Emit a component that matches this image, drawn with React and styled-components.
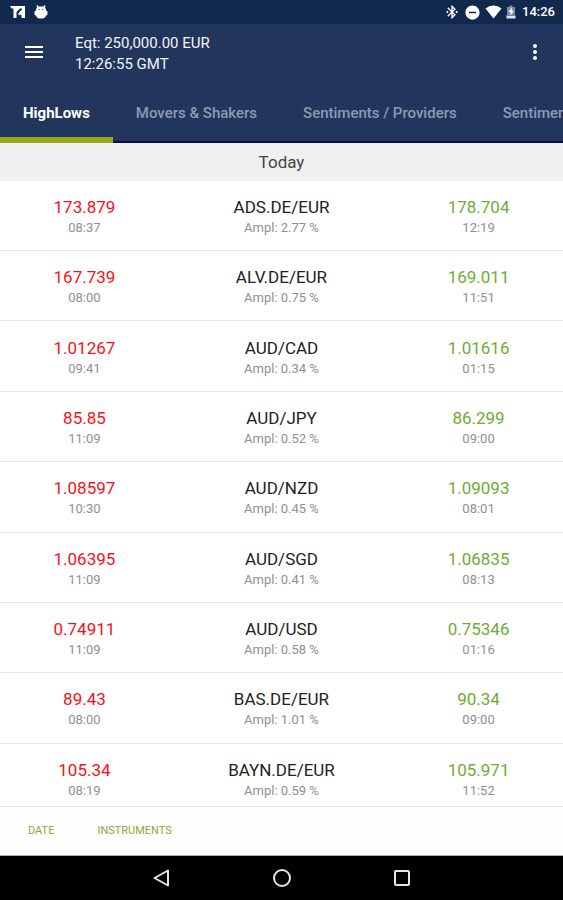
import React, { useState } from "react";
import styled, { createGlobalStyle } from "styled-components";
import { MdBluetoothConnected, MdRemoveCircle, MdMenu, MdMoreVert } from "react-icons/md";

const GlobalStyle = createGlobalStyle`
  * {
    box-sizing: border-box;
  }
  body {
    margin: 0;
    background: #fff;
    font-family: Roboto, "Liberation Sans", sans-serif;
  }
`;

const Screen = styled.div`
  display: flex;
  flex-direction: column;
  height: 100vh;
  overflow: hidden;
`;

const StatusBar = styled.div`
  display: flex;
  flex: none;
  align-items: center;
  justify-content: space-between;
  height: 24px;
  padding: 0 8px 0 9px;
  background: #10294c;
  color: #fff;
`;

const StatusGroup = styled.div`
  display: flex;
  align-items: center;
  gap: ${props => props.$gap}px;
`;

const Clock = styled.span`
  padding-left: 2px;
  font-size: 13px;
  font-weight: 500;
  line-height: 24px;
`;

const Header = styled.header`
  flex: none;
  background: #22365d;
`;

const Toolbar = styled.div`
  display: flex;
  align-items: center;
  padding: 5px 16px 8px 22px;
`;

const IconButton = styled.button`
  display: flex;
  padding: 0;
  border: none;
  background: none;
  color: #fff;
  cursor: pointer;
`;

const Account = styled.div`
  flex: 1;
  padding: 4px 0 0 29px;
  color: #f2f4f7;
  font-size: 15px;
  font-weight: 400;
  line-height: 21px;
`;

const Tabs = styled.div`
  display: flex;
  height: 60px;
  overflow: hidden;
  box-shadow: inset 0 -2px #0b0b58;
`;

const Tab = styled.button`
  flex: none;
  padding: 6px 23px 0;
  border: none;
  border-bottom: 6px solid ${props => (props.$active ? "#9aa91c" : "transparent")};
  background: none;
  color: ${props => (props.$active ? "#fff" : "#8c9ab3")};
  font-family: inherit;
  font-size: 15px;
  font-weight: ${props => (props.$active ? 700 : 500)};
  line-height: 20px;
  cursor: pointer;
`;

const Period = styled.h2`
  flex: none;
  margin: 0;
  background: #f0f0f0;
  color: #444;
  font-size: 17px;
  font-weight: 400;
  line-height: 38px;
  text-align: center;
`;

const List = styled.main`
  flex: 1;
  min-height: 0;
  overflow-y: auto;
  scrollbar-width: none;
`;

const Table = styled.table`
  width: 100%;
  height: calc(100% + 8px);
  border-collapse: collapse;
  table-layout: fixed;
`;

const Row = styled.tr`
  border-bottom: 1px solid #e8e8e8;
`;

const Cell = styled.td`
  width: ${props => props.width};
  padding: 3px 0 0;
  text-align: center;
`;

const Value = styled.div`
  color: ${props => props.color};
  font-size: 17px;
  line-height: 21px;
`;

const Detail = styled.div`
  color: #909090;
  font-size: 13px;
  line-height: 19px;
`;

const Actions = styled.footer`
  display: flex;
  flex: none;
  gap: 43px;
  padding: 0 28px;
  border-top: 1px solid #e8e8e8;
  border-bottom: 1px solid #aaa;
  background: #fefefe;
`;

const Action = styled.button`
  padding: 0;
  border: none;
  background: none;
  color: #94a53c;
  font-family: inherit;
  font-size: 11px;
  line-height: 48px;
  text-transform: uppercase;
  cursor: pointer;
`;

const NavBar = styled.nav`
  display: flex;
  flex: none;
  align-items: center;
  justify-content: center;
  gap: 100px;
  height: 44px;
  background: #000;
`;

const tabs = ["HighLows", "Movers & Shakers", "Sentiments / Providers", "Sentiments / Instruments"];

const rows = [
  { name: "ADS.DE/EUR", ampl: "2.77", low: "173.879", lowTime: "08:37", high: "178.704", highTime: "12:19" },
  { name: "ALV.DE/EUR", ampl: "0.75", low: "167.739", lowTime: "08:00", high: "169.011", highTime: "11:51" },
  { name: "AUD/CAD", ampl: "0.34", low: "1.01267", lowTime: "09:41", high: "1.01616", highTime: "01:15" },
  { name: "AUD/JPY", ampl: "0.52", low: "85.85", lowTime: "11:09", high: "86.299", highTime: "09:00" },
  { name: "AUD/NZD", ampl: "0.45", low: "1.08597", lowTime: "10:30", high: "1.09093", highTime: "08:01" },
  { name: "AUD/SGD", ampl: "0.41", low: "1.06395", lowTime: "11:09", high: "1.06835", highTime: "08:13" },
  { name: "AUD/USD", ampl: "0.58", low: "0.74911", lowTime: "11:09", high: "0.75346", highTime: "01:16" },
  { name: "BAS.DE/EUR", ampl: "1.01", low: "89.43", lowTime: "08:00", high: "90.34", highTime: "09:00" },
  { name: "BAYN.DE/EUR", ampl: "0.59", low: "105.34", lowTime: "08:19", high: "105.971", highTime: "11:52" },
];

function BrandIcon() {
  return (
    <svg width="17" height="14" viewBox="0 0 17 14" fill="#fff">
      <path d="M1 1H16V13H12.500V10H9.500V8L13 4.500V3.500H11L7.500 7V13H4.500V3.500H2.500Z" />
    </svg>
  );
}

function DroidIcon() {
  return (
    <svg width="14" height="14" viewBox="0 0 14 14">
      <path d="M3 0.500L4.500 3M11 0.500L9.500 3" stroke="#fff" strokeWidth="1.500" />
      <rect x="2" y="1.500" width="10" height="12" rx="4" fill="#fff" />
      <rect x="0.500" y="5.500" width="13" height="5" rx="1.500" fill="#fff" />
      <path d="M4.500 4.500H6M8 4.500H9.500" stroke="#5b6b85" />
    </svg>
  );
}

function SignalIcon() {
  return (
    <svg width="17" height="14" viewBox="0 0 17 14" fill="#fff">
      <path d="M0.500 3.500Q4 0.500 8.500 0.500T16.500 3.500L8.500 13.500Z" />
    </svg>
  );
}

function BatteryIcon() {
  return (
    <svg width="10" height="14" viewBox="0 0 10 14">
      <path d="M3.500 0.500H6.500V2H9V10H1V2H3.500Z" fill="#7f8da3" />
      <path d="M0.500 10.500H9.500V13.500H0.500Z" fill="#dfe4ea" />
      <path d="M5.800 2.500L2.500 7H4.500V10.500L7.800 5.800H5.800Z" fill="#fff" />
    </svg>
  );
}

function BackIcon() {
  return (
    <svg width="20" height="20" viewBox="0 0 20 20" fill="none" stroke="#e6e6e6" strokeWidth="2">
      <path d="M16 2.500V17.500L2.500 10Z" strokeLinejoin="round" />
    </svg>
  );
}

function HomeIcon() {
  return (
    <svg width="20" height="20" viewBox="0 0 20 20" fill="none" stroke="#e6e6e6" strokeWidth="2">
      <circle cx="10" cy="10" r="8" />
    </svg>
  );
}

function RecentIcon() {
  return (
    <svg width="20" height="20" viewBox="0 0 20 20" fill="none" stroke="#e6e6e6" strokeWidth="2">
      <rect x="3" y="3" width="14" height="14" rx="1" />
    </svg>
  );
}

function Quote({ width, value, detail, color }) {
  return (
    <Cell width={width}>
      <Value color={color}>{value}</Value>
      <Detail>{detail}</Detail>
    </Cell>
  );
}

function App() {
  const [active, setActive] = useState(tabs[0]);

  return (
    <Screen>
      <GlobalStyle />
      <StatusBar>
        <StatusGroup $gap={8}>
          <BrandIcon />
          <DroidIcon />
        </StatusGroup>
        <StatusGroup $gap={4}>
          <MdBluetoothConnected size={16} />
          <MdRemoveCircle size={17} />
          <SignalIcon />
          <BatteryIcon />
          <Clock>14:26</Clock>
        </StatusGroup>
      </StatusBar>
      <Header>
        <Toolbar>
          <IconButton aria-label="Menu">
            <MdMenu size={24} />
          </IconButton>
          <Account>
            <div>Eqt: 250,000.00 EUR</div>
            <div>12:26:55 GMT</div>
          </Account>
          <IconButton aria-label="More options">
            <MdMoreVert size={24} />
          </IconButton>
        </Toolbar>
        <Tabs role="tablist">
          {tabs.map(tab => (
            <Tab
              key={tab}
              role="tab"
              aria-selected={tab === active}
              $active={tab === active}
              onClick={() => setActive(tab)}
            >
              {tab}
            </Tab>
          ))}
        </Tabs>
      </Header>
      <Period id="period">Today</Period>
      <List>
        <Table aria-labelledby="period">
          <tbody>
            {rows.map(row => (
              <Row key={row.name}>
                <Quote width="30%" value={row.low} detail={row.lowTime} color="#fa0f19" />
                <Quote width="40%" value={row.name} detail={`Ampl: ${row.ampl} %`} color="#222" />
                <Quote width="30%" value={row.high} detail={row.highTime} color="#70ac35" />
              </Row>
            ))}
          </tbody>
        </Table>
      </List>
      <Actions>
        <Action>Date</Action>
        <Action>Instruments</Action>
      </Actions>
      <NavBar>
        <IconButton aria-label="Back">
          <BackIcon />
        </IconButton>
        <IconButton aria-label="Home">
          <HomeIcon />
        </IconButton>
        <IconButton aria-label="Recent apps">
          <RecentIcon />
        </IconButton>
      </NavBar>
    </Screen>
  );
}

export default App;
